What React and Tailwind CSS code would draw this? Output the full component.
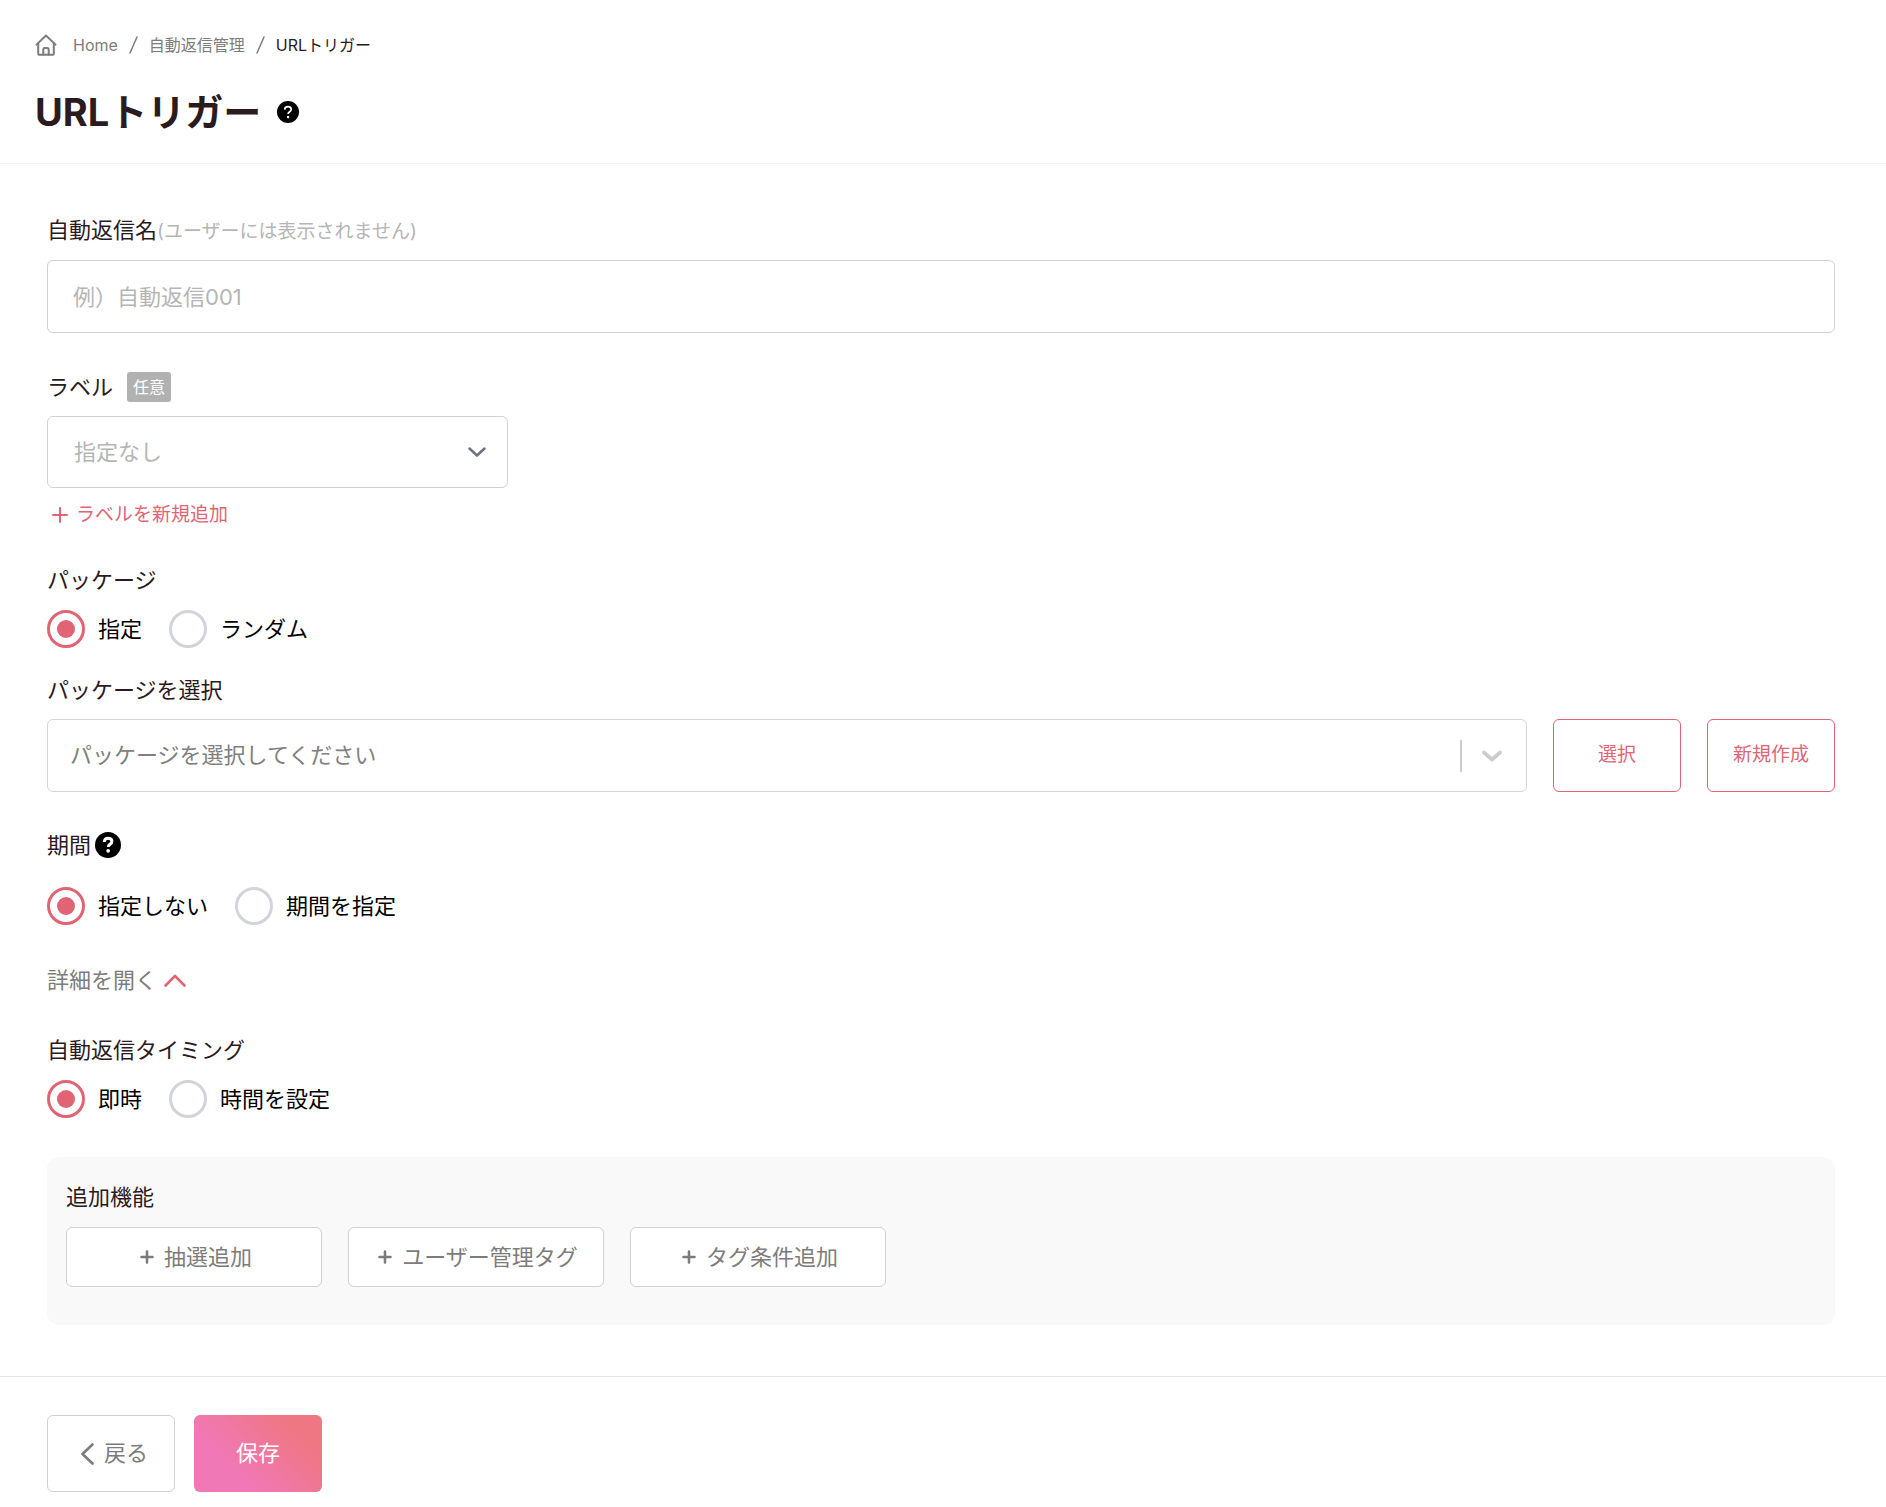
import { useState } from "react";

const label = "text-[22px] leading-7 text-[#2b1a20]";

function HomeIcon() {
  return (
    <svg viewBox="0 0 22 22" className="size-[22px]" fill="none" stroke="#7c7c7c" strokeWidth="2" strokeLinecap="round" strokeLinejoin="round" aria-hidden="true">
      <path d="M1.500 10.600 11 1.500l9.500 9.100" />
      <path d="M3.200 9.200v10a1.600 1.600 0 0 0 1.600 1.600h12.400a1.600 1.600 0 0 0 1.600-1.600v-10" />
      <path d="M8.300 20.600v-5a1.500 1.500 0 0 1 1.500-1.500h2.400a1.500 1.500 0 0 1 1.500 1.500v5" />
    </svg>
  );
}

function HelpIcon({ className, bold }) {
  return (
    <svg viewBox="0 0 24 24" className={className} aria-hidden="true">
      <circle cx="12" cy="12" r="12" fill="#000" />
      <path
        d={bold ? "M8.600 9.200C8.700 6.900 10 5.800 12.100 5.800c2 0 3.500 1.100 3.500 3 0 2.500-3.300 2.600-3.300 5" : "M8.400 9.400C8.500 7.300 10 6.200 12 6.200c2 0 3.500 1.100 3.500 3 0 2.500-3.500 2.600-3.500 5.100"}
        fill="none"
        stroke="#fff"
        strokeWidth={bold ? 2.8 : 1.8}
      />
      <circle cx="12.100" cy="17.400" r={bold ? 1.7 : 1.3} fill="#fff" />
    </svg>
  );
}

function Stroke({ d, box, className, width }) {
  return (
    <svg viewBox={box} className={className} fill="none" stroke="currentColor" strokeWidth={width} strokeLinecap="round" strokeLinejoin="round" aria-hidden="true">
      <path d={d} />
    </svg>
  );
}

function Slash() {
  return <Stroke box="0 0 9 18" d="M1 17 8 1" width="1.500" className="mx-[11px] h-[18px] w-[9px]" />;
}

function RadioGroup({ name, legend, options, className }) {
  const [value, setValue] = useState(options[0]);
  return (
    <div role="radiogroup" aria-label={legend} className={className}>
      <div className="flex flex-wrap gap-[27px]">
        {options.map((option) => (
          <label key={option} className="flex items-center gap-[13px] text-[22px] leading-7 text-black">
            <input
              type="radio"
              name={name}
              checked={value === option}
              onChange={() => setValue(option)}
              className="grid size-[38px] shrink-0 appearance-none place-items-center rounded-full border-[3px] border-[#d1d5db] bg-white before:size-[18px] before:rounded-full before:content-[''] checked:border-[#e16475] checked:before:bg-[#e16475]"
            />
            {option}
          </label>
        ))}
      </div>
    </div>
  );
}

function OutlineButton({ children }) {
  return (
    <button type="button" className="h-[73px] w-32 shrink-0 rounded-md border border-[#e16475] bg-white text-[19px] text-[#e16475]">
      {children}
    </button>
  );
}

function AddButton({ children }) {
  return (
    <button type="button" className="flex h-[60px] w-64 items-center justify-center gap-2.5 rounded-md border border-[#d1d1d1] bg-white pl-1 text-[22px] text-[#7c7c7c]">
      <Stroke box="0 0 14 14" d="M7 1.500v11M1.500 7h11" width="2.600" className="size-3.5" />
      {children}
    </button>
  );
}

export default function App() {
  return (
    <div className="bg-white font-['Inter','Noto_Sans_CJK_JP',sans-serif]">
      <header className="border-b border-[#f4f4f4] px-[35px] pt-8 pb-[27px]">
        <nav aria-label="Breadcrumb" className="flex items-center text-base leading-[26px] text-[#7c7c7c]">
          <HomeIcon />
          <a href="#home" className="ml-4">Home</a>
          <Slash />
          <a href="#auto-reply">自動返信管理</a>
          <Slash />
          <span aria-current="page" className="text-[#2b1a20]">URLトリガー</span>
        </nav>
        <div className="mt-[30px] flex items-center gap-4">
          <h1 className="text-[38px] leading-[48px] font-bold text-[#2b1a20]">URLトリガー</h1>
          <button type="button" aria-label="ヘルプ"><HelpIcon className="size-[22px]" /></button>
        </div>
      </header>

      <form onSubmit={(e) => e.preventDefault()}>
        <div className="flex flex-col pt-[52px] pr-[51px] pb-[51px] pl-[47px]">
          <label htmlFor="reply-name" className={label}>
            自動返信名<span className="text-[19px] text-[#b5b5b5]">(ユーザーには表示されません)</span>
          </label>
          <input
            id="reply-name"
            type="text"
            placeholder="例）自動返信001"
            className="mt-3.5 h-[73px] w-full rounded-md border border-[#d1d1d1] bg-white px-[25px] text-[22px] text-[#2b1a20] placeholder:text-[#b5b5b5]"
          />

          <div className="mt-[39px] flex items-center gap-3.5">
            <label htmlFor="tag-label" className={label}>ラベル</label>
            <span className="rounded-[3px] bg-[#b1b1b1] px-1.5 text-base leading-[30px] text-white">任意</span>
          </div>
          <div className="relative mt-3.5 w-[461px] max-w-full">
            <select id="tag-label" className="h-[72px] w-full appearance-none rounded-md border border-[#d1d1d1] bg-white px-[26px] text-[22px] text-[#b5b5b5]">
              <option>指定なし</option>
            </select>
            <Stroke box="0 0 18 10" d="m1.500 1.500 7.500 7 7.500-7" width="2.500" className="pointer-events-none absolute top-[31px] right-[22px] h-2.5 w-[18px] text-[#6b7280]" />
          </div>
          <button type="button" className="mt-[13px] flex items-center gap-2 self-start pl-[5px] text-[19px] leading-7 text-[#e16475]">
            <Stroke box="0 0 16 16" d="M8 1v14M1 8h14" width="2" className="size-4" />
            ラベルを新規追加
          </button>

          <p className={`mt-[37px] ${label}`}>パッケージ</p>
          <RadioGroup name="package-mode" legend="パッケージ" options={["指定", "ランダム"]} className="mt-4" />

          <label htmlFor="package" className={`mt-7 ${label}`}>パッケージを選択</label>
          <div className="mt-[15px] flex gap-[26px]">
            <div className="relative flex-1">
              <select id="package" className="h-[73px] w-full appearance-none rounded-md border border-[#d1d5db] bg-white pr-20 pl-[22px] text-[22px] text-[#808080]">
                <option>パッケージを選択してください</option>
              </select>
              <div className="pointer-events-none absolute inset-y-0 right-[25px] flex items-center gap-5 text-[#cccccc]">
                <span className="h-8 w-0.5 bg-[#cccccc]" />
                <Stroke box="0 0 20 12" d="m2 2.500 8 7 8-7" width="3.800" className="h-3 w-5" />
              </div>
            </div>
            <OutlineButton>選択</OutlineButton>
            <OutlineButton>新規作成</OutlineButton>
          </div>

          <div className="mt-[39px] flex items-center gap-1">
            <p className={label}>期間</p>
            <button type="button" aria-label="期間のヘルプ"><HelpIcon bold className="size-[26px]" /></button>
          </div>
          <RadioGroup name="period" legend="期間" options={["指定しない", "期間を指定"]} className="mt-7" />

          <button type="button" className="mt-[41px] flex items-center gap-[7px] self-start text-[22px] leading-7 text-[#7c7c7c]">
            詳細を開く
            <Stroke box="0 0 22 13" d="m1.500 11.500 9.500-9.500 9.500 9.500" width="2.600" className="h-[13px] w-[22px] text-[#e16475]" />
          </button>

          <p className={`mt-[42px] ${label}`}>自動返信タイミング</p>
          <RadioGroup name="timing" legend="自動返信タイミング" options={["即時", "時間を設定"]} className="mt-4" />

          <section className="mt-[39px] rounded-xl bg-[#f9f9f9] px-[19px] pt-[26px] pb-[38px]">
            <h2 className={label}>追加機能</h2>
            <div className="mt-4 flex flex-wrap gap-[26px]">
              <AddButton>抽選追加</AddButton>
              <AddButton>ユーザー管理タグ</AddButton>
              <AddButton>タグ条件追加</AddButton>
            </div>
          </section>
        </div>

        <footer className="flex gap-[19px] border-t border-[#e5e5e5] px-[47px] pt-[38px] pb-4 text-[22px]">
          <button type="button" className="flex h-[77px] w-32 items-center justify-center gap-2.5 rounded-md border border-[#d1d1d1] bg-white pl-1.5 text-[#7c7c7c]">
            <Stroke box="0 0 14 22" d="M12.500 1.500 2.500 11l10 9.500" width="2.600" className="h-[22px] w-3.5" />
            戻る
          </button>
          <button type="submit" className="h-[77px] w-32 rounded-md bg-linear-[45deg,#f078b6_30%,#ef7784_78%] text-white">保存</button>
        </footer>
      </form>
    </div>
  );
}
